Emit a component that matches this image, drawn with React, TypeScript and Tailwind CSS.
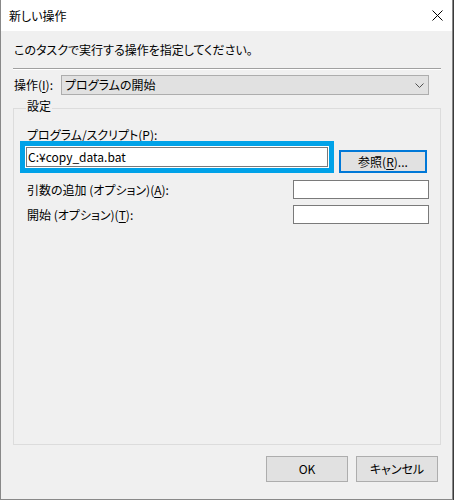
import React from 'react';

const font = "[font-family:'Noto_Sans_CJK_JP',sans-serif] [font-feature-settings:'palt']";

function Key({ k }: { k: string }) {
  return <span className="underline underline-offset-2">{k}</span>;
}

function TextBox({ value, className }: { value?: string; className?: string }) {
  return (
    <div className={`h-[19px] border border-[#7a7a7a] bg-white px-[1px] text-[12px] leading-[17px] text-black ${className ?? ''}`}>
      {value}
    </div>
  );
}

export default function App() {
  return (
    <div className="w-[454px] h-[500px] bg-[#3a3a3a]">
      <div className={`w-[453px] h-[500px] border-l border-r border-b border-[#888] bg-[#f0f0f0] text-[12px] text-black ${font}`}>
        {/* title bar */}
        <div className="h-[31px] bg-white flex items-center justify-between pl-[8px] pr-[8px]">
          <span className="text-[12px] leading-[16px]">新しい操作</span>
          <svg width="11" height="11" viewBox="0 0 11 11" className="mr-[1px]">
            <path d="M0.5 0.5 L10.5 10.5 M10.5 0.5 L0.5 10.5" stroke="#000" strokeWidth="1" fill="none" />
          </svg>
        </div>

        <div className="pt-[11px]">
          <p className="ml-[13px] leading-[16px]">このタスクで実行する操作を指定してください。</p>
          <div className="ml-[12px] mt-[10px] w-[428px] h-[2px] border-t border-[#a0a0a0] border-b border-b-white" />

          <div className="flex items-center mt-[5px] ml-[13px]">
            <span className="w-[47px] leading-[16px]">
              操作(<Key k="I" />):
            </span>
            <div className="w-[368px] h-[20px] bg-[#e1e1e1] border border-[#adadad] flex items-center justify-between pl-[3px] pr-[4px]">
              <span className="leading-[16px]">プログラムの開始</span>
              <svg width="9" height="5" viewBox="0 0 9 5">
                <path d="M0.5 0.5 L4.5 4.5 L8.5 0.5" stroke="#505050" strokeWidth="1" fill="none" />
              </svg>
            </div>
          </div>

          <fieldset className="ml-[12px] mt-[3px] w-[428px] h-[347px] border border-[#dcdcdc] pl-[6px] pr-[11px] pt-[8px]">
            <legend className="ml-[6px] px-[1px] pb-[5px] leading-[16px]">設定</legend>

            <p className="ml-[7px] leading-[16px]">
              プログラム/スクリプト(<Key k="P" />):
            </p>
            <div className="flex items-end gap-[5px] -mt-[2px]">
              <div className="w-[314px] h-[32px] border-[5px] border-[#00a2e8] bg-white p-[1px]">
                <TextBox value="C:¥copy_data.bat" className="h-[20px] leading-[18px]" />
              </div>
              <button className="w-[88px] h-[23px] border-2 border-[#0078d7] bg-[#e1e1e1] leading-[16px]">
                参照(<Key k="R" />)...
              </button>
            </div>

            <div className="flex items-center justify-between mt-[7px]">
              <span className="ml-[7px] leading-[16px]">
                引数の追加 (オプション)(<Key k="A" />):
              </span>
              <TextBox className="w-[136px]" />
            </div>
            <div className="flex items-center justify-between mt-[6px]">
              <span className="ml-[7px] leading-[16px]">
                開始 (オプション)(<Key k="T" />):
              </span>
              <TextBox className="w-[136px]" />
            </div>
          </fieldset>

          <div className="flex justify-end gap-[8px] mt-[11px] mr-[14px]">
            <button className="w-[82px] h-[26px] border border-[#adadad] bg-[#e1e1e1] leading-[16px]">OK</button>
            <button className="w-[82px] h-[26px] border border-[#adadad] bg-[#e1e1e1] leading-[16px]">キャンセル</button>
          </div>
        </div>
      </div>
    </div>
  );
}
